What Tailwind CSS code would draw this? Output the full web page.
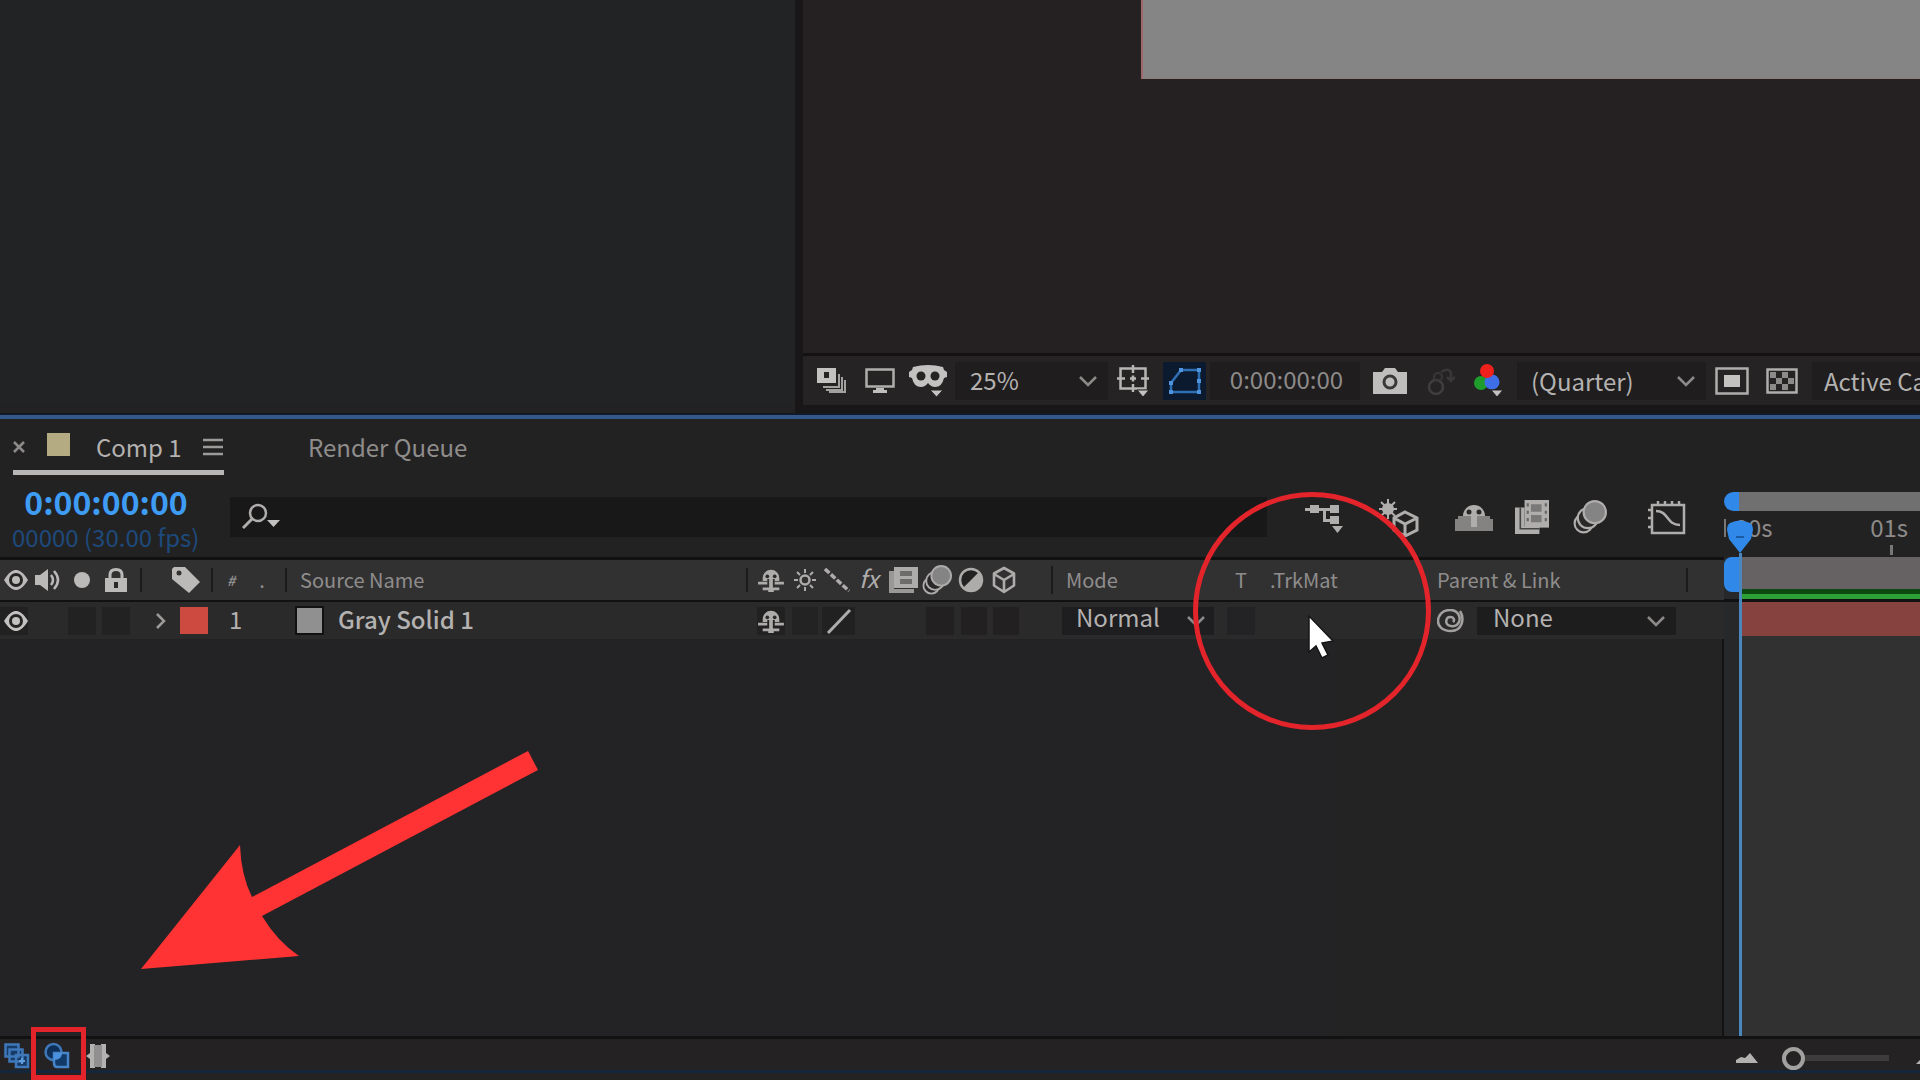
<!DOCTYPE html>
<html lang="en">
<head>
<meta charset="utf-8">
<title>Comp 1 - Timeline</title>
<script src="https://cdn.jsdelivr.net/npm/@tailwindcss/browser@4"></script>
</head>
<body class="relative flex h-screen flex-col overflow-hidden bg-[#232223] font-['Noto_Sans_CJK_SC','Noto_Sans',sans-serif] text-2xl leading-8 text-[#b4b2b0]">

<svg class="hidden" aria-hidden="true">
  <symbol id="chev" viewBox="0 0 20 12"><path d="M2 2l8 8 8-8" fill="none" stroke="currentColor" stroke-width="2.5"/></symbol>
  <symbol id="eye" viewBox="0 0 24 20"><path d="M0 10C5 2 9 0 12 0s7 2 12 10c-5 8-9 10-12 10S5 18 0 10z" fill="currentColor"/><circle cx="12" cy="10" r="7" fill="#252324"/><circle cx="12" cy="10" r="4" fill="currentColor"/></symbol>
  <symbol id="shy" viewBox="0 0 28 26"><path d="M5 11a9 9 0 0 1 18 0v3h-5v-2h-2v9h7v3h-6v2h-6v-2H5v-3h7v-9h-2v2H5z" fill="currentColor"/><path d="M0 15h10v3H0zM18 15h10v3H18z" fill="currentColor"/><circle cx="10" cy="9" r="2" fill="#2a2829"/><circle cx="18" cy="9" r="2" fill="#2a2829"/></symbol>
  <symbol id="cube" viewBox="0 0 26 28"><path d="M13 2l10 5.500v12L13 26 3 19.500v-12zM3 8l10 6 10-6M13 14v12" fill="none" stroke="currentColor" stroke-width="2.600" stroke-linejoin="round"/></symbol>
  <symbol id="discs" viewBox="0 0 32 32"><circle cx="10" cy="22" r="8.500" fill="#2a2829" stroke="currentColor" stroke-width="2"/><circle cx="14" cy="17" r="9.500" fill="#2a2829" stroke="currentColor" stroke-width="2"/><circle cx="20.500" cy="11.500" r="10.500" fill="#858484" stroke="currentColor" stroke-width="2"/></symbol>
  <symbol id="film" viewBox="0 0 32 32"><path d="M0 7h9v18h14v7H0z" fill="currentColor"/><path d="M5 7v20h18" fill="none" stroke="#444" stroke-width="1.500"/><path d="M9 0h23v26H9z" fill="currentColor"/><path d="M15 4h10v7H15zM15 14h10v7H15z" fill="#7a7878"/><path d="M11 3h2v3h-2zM11 10h2v3h-2zM11 17h2v3h-2zM28 3h2v3h-2zM28 10h2v3h-2zM28 17h2v3h-2z" fill="#666"/></symbol>
</svg>

<!-- Project panel and composition viewer -->
<section class="flex h-[413px] shrink-0">
  <div class="mb-2 w-[795px] shrink-0 bg-[#222324]"></div>
  <div class="w-2 shrink-0 bg-[#181617]"></div>
  <main class="flex min-w-0 flex-1 flex-col overflow-hidden bg-[#252122]">
    <div class="flex min-h-0 flex-1 flex-col pl-[338px]">
      <div class="h-[79px] border-b border-l-2 border-b-[#8f7b7b] border-l-[#a0686a] bg-[#858585]"></div>
    </div>
    <div class="flex h-[52px] shrink-0 items-center border-t-3 border-[#131112] bg-[#252323] pl-[5px]">
      <button class="flex h-10 w-12 shrink-0 items-center justify-center" aria-label="Always preview"><svg class="h-[26px] w-[30px]" viewBox="0 0 30 26"><path d="M0 0h19v15H0z" fill="#c4c2c1"/><path d="M7 4h5v6H7z" fill="#252323"/><path d="M22 6v13H6M25 9v13H9M28 12v12H12" fill="none" stroke="#a3a1a0" stroke-width="2"/></svg></button>
      <button class="flex h-10 w-12 shrink-0 items-center justify-center" aria-label="Primary viewer"><svg class="h-[26px] w-[30px]" viewBox="0 0 30 26"><path d="M1.500 1.500h27v17h-27z" fill="none" stroke="#b0aeac" stroke-width="2.500"/><path d="M11 20h8v2h3v3H8v-3h3z" fill="#c0bebc"/></svg></button>
      <button class="flex h-10 w-12 shrink-0 items-center justify-center" aria-label="VR view"><svg class="h-8 w-[38px]" viewBox="0 0 38 32"><path d="M4 2q15-4 30 0l1 3 3 2v5l-3 1q-2 9-9 9-4 0-7-4-3 4-7 4-7 0-9-9l-3-1V7l3-2z" fill="#c4c2c1"/><circle cx="12" cy="11" r="4.500" fill="#252323"/><circle cx="26" cy="11" r="4.500" fill="#252323"/><path d="M21 25h13l-6.500 7z" fill="#c4c2c1" stroke="#252323"/></svg></button>
      <div class="relative ml-[3px] h-[38px] w-[153px] shrink-0 bg-[#1f1d1e]">
        <select class="h-[36px] w-full appearance-none pl-[15px] leading-[36px]" aria-label="Magnification"><option>25%</option></select>
        <svg class="pointer-events-none absolute top-[13px] right-2.5 h-3 w-5 text-[#8d8b8a]"><use href="#chev"/></svg>
      </div>
      <button class="flex h-10 w-[50px] shrink-0 items-center justify-center" aria-label="Grid and guides"><svg class="h-[34px] w-8" viewBox="0 0 32 34"><path d="M3.500 4.500h25v20h-25z" fill="none" stroke="#b8b6b4" stroke-width="2.500"/><path d="M16 1v8M16 20v8M0 14.500h8M24 14.500h8M13 14.500h6M16 11.500v6" stroke="#b8b6b4" stroke-width="2.500"/><path d="M20 26h12l-6 7z" fill="#c4c2c1" stroke="#252323"/></svg></button>
      <button class="ml-[5px] flex h-[38px] w-[43px] shrink-0 items-center justify-center bg-[#0b1a2e]" aria-label="Mask visibility"><svg class="h-7 w-[34px]" viewBox="0 0 34 28"><path d="M13 3h18v22H3v-9z" fill="none" stroke="#2f6fb3" stroke-width="2.500"/><path d="M11 1h4v4h-4zM29 1h4v4h-4zM29 12h4v4h-4zM1 14h4v4H1zM1 23h4v4H1zM29 23h4v4h-4z" fill="#4f93dc"/></svg></button>
      <button class="ml-1 h-[38px] w-[150px] shrink-0 bg-[#1f1d1e] pb-[3px] pl-[3px] text-[#8d8b8a]">0:00:00:00</button>
      <button class="flex h-10 w-[60px] shrink-0 items-center justify-center" aria-label="Take snapshot"><svg class="h-[26px] w-[34px]" viewBox="0 0 34 26"><path d="M0 4h9l3-4h10l3 4h9v22H0z" fill="#c0bebc"/><circle cx="17" cy="14" r="6" fill="none" stroke="#3a3839" stroke-width="3"/></svg></button>
      <button class="flex h-10 w-10 shrink-0 items-center justify-center" aria-label="Show snapshot" disabled><svg class="h-7 w-[30px]" viewBox="0 0 30 28"><circle cx="11" cy="20" r="7" fill="none" stroke="#403e3f" stroke-width="2.500"/><circle cx="13" cy="10" r="4" fill="none" stroke="#393738" stroke-width="2"/><path d="M16 5q8-5 10 1v6M22 10l4 4 4-4" fill="none" stroke="#393738" stroke-width="2.500"/></svg></button>
      <button class="flex h-10 w-[57px] shrink-0 items-center justify-center" aria-label="Channels"><svg class="h-[34px] w-[30px]" viewBox="0 0 30 34"><circle cx="7" cy="19" r="7" fill="#1f9d2c"/><circle cx="18" cy="18" r="7.500" fill="#3f6fe8"/><circle cx="13" cy="7" r="7" fill="#f0201c"/><path d="M17 26h12l-6 7z" fill="#c4c2c1" stroke="#252323"/></svg></button>
      <div class="relative h-[38px] w-[189px] shrink-0 bg-[#1f1d1e]">
        <select class="h-[38px] w-full appearance-none pl-3.5 leading-[38px]" aria-label="Resolution"><option>(Quarter)</option></select>
        <svg class="pointer-events-none absolute top-[13px] right-2.5 h-3 w-5 text-[#8d8b8a]"><use href="#chev"/></svg>
      </div>
      <button class="flex h-10 w-[52px] shrink-0 items-center justify-center" aria-label="Region of interest"><svg class="h-7 w-[34px]" viewBox="0 0 34 28"><path d="M1.500 1.500h31v25h-31z" fill="none" stroke="#b0aeac" stroke-width="2.500"/><path d="M9 8h16v12H9z" fill="#c4c2c1"/></svg></button>
      <button class="flex h-10 w-12 shrink-0 items-center justify-center" aria-label="Transparency grid"><svg class="h-[26px] w-8" viewBox="0 0 32 26"><path d="M1.500 1.500h29v23h-29z" fill="none" stroke="#b0aeac" stroke-width="2.500"/><path d="M4 4h6v6H4zM16 4h6v6h-6zM10 10h6v6h-6zM22 10h6v6h-6zM4 16h6v6H4zM16 16h6v6h-6z" fill="#8d8b8a"/></svg></button>
      <div class="ml-1.5 h-[38px] shrink-0 bg-[#1f1d1e]">
        <select class="h-[38px] appearance-none pl-3 leading-[38px]" aria-label="3D view"><option>Active Camera</option></select>
      </div>
    </div>
    <div class="h-2 shrink-0 bg-[#181617]"></div>
  </main>
</section>

<!-- Timeline panel -->
<section class="flex min-h-0 flex-1 flex-col border-t-2 border-[#121a26]">
  <div class="h-1 shrink-0 bg-[#34588a]"></div>
  <div class="flex min-h-0 flex-1">
    <div class="flex min-w-0 flex-1 flex-col">
      <!-- Panel tabs -->
      <nav class="flex h-[56px] shrink-0 items-start pl-[13px]">
        <div class="flex h-[56px] w-[211px] items-center border-b-5 border-[#b9b7b6] pt-1">
          <button class="h-3 w-3" aria-label="Close Comp 1"><svg class="h-3 w-3" viewBox="0 0 12 12"><path d="M1 1l10 10M11 1L1 11" stroke="#8d8b8a" stroke-width="2.500"/></svg></button>
          <span class="mb-1 ml-[22px] h-[23px] w-[23px] bg-[#b5ab83]"></span>
          <a href="#comp" class="ml-[26px] w-[107px] text-[#b4b2b0]">Comp 1</a>
          <button class="h-5 w-5 shrink-0" aria-label="Panel menu"><svg class="h-5 w-5" viewBox="0 0 20 20"><path d="M0 3h20M0 10h20M0 17h20" stroke="#9d9b9a" stroke-width="2.500"/></svg></button>
        </div>
        <a href="#queue" class="ml-[84px] mt-3 text-[#8f8d8c]">Render Queue</a>
      </nav>
      <!-- Time, search and panel switches -->
      <div class="flex h-[82px] shrink-0">
        <div class="flex w-[230px] flex-col pl-3">
          <button class="mt-2 h-9 w-[188px] text-center text-[32px] leading-9 font-bold text-[#3f9cf5]">0:00:00:00</button>
          <span class="mt-1 h-7 leading-7 whitespace-nowrap text-[#1d4a7c]">00000 (30.00 fps)</span>
        </div>
        <label class="mt-[22px] flex h-10 min-w-0 flex-1 items-center bg-[#191819] pl-3">
          <svg class="h-7 w-10 shrink-0" viewBox="0 0 40 28"><circle cx="16" cy="10" r="8" fill="none" stroke="#b0aeac" stroke-width="2.500"/><path d="M10 16L1 25" stroke="#b0aeac" stroke-width="3"/><path d="M25 17h13l-6.500 7z" fill="#c4c2c1"/></svg>
          <input class="h-full min-w-0 flex-1 bg-transparent outline-none" aria-label="Search layers">
        </label>
        <div class="flex w-[457px] shrink-0 pt-6 pl-[38px] text-[#b0aeac]">
          <button class="h-9 w-[38px]" aria-label="Composition mini-flowchart"><svg class="h-9 w-[38px]" viewBox="0 0 38 36"><path d="M0 9h5V6h9v3h11V6h9v8h-9v-2h-4v8h4v-3h9v8h-9v-2h-7V12h-4v2H5v-2H0z" fill="currentColor"/><path d="M27 27h11l-5.500 7z" fill="currentColor"/></svg></button>
          <button class="ml-9 h-[38px] w-10" aria-label="Draft 3D"><svg class="h-[38px] w-10" viewBox="0 0 40 38"><circle cx="9" cy="10" r="6" fill="currentColor"/><path d="M9 0v20M0 10h18M2 3l14 14M16 3L2 17" stroke="currentColor" stroke-width="2"/><path d="M26 13l12 6v12l-12 6-11-6V19zM15 19l11 6 12-6M26 25v12" fill="#232223" stroke="currentColor" stroke-width="3"/></svg></button>
          <button class="ml-9 h-[38px] w-[38px]" aria-label="Hide shy layers"><svg class="h-[38px] w-[38px]" viewBox="0 0 38 38"><path d="M8 17a11 11 0 0 1 22 0v2H8z" fill="currentColor"/><path d="M3 17h32v3h3v12H0V20h3z" fill="#858382"/><path d="M16 17h6v11h-6z" fill="currentColor"/><circle cx="14" cy="13" r="2.500" fill="#2a2829"/><circle cx="24" cy="13" r="2.500" fill="#2a2829"/></svg></button>
          <button class="ml-[22px] h-9 w-[34px]" aria-label="Frame blending"><svg class="h-9 w-[34px]"><use href="#film"/></svg></button>
          <button class="ml-6 h-9 w-[34px]" aria-label="Motion blur"><svg class="h-9 w-[34px]"><use href="#discs"/></svg></button>
          <button class="ml-[41px] h-9 w-[38px]" aria-label="Graph editor"><svg class="h-9 w-[38px]" viewBox="0 0 38 36"><path d="M4 6h32v28H4zM8 12c13 0 10 14 24 14" fill="none" stroke="currentColor" stroke-width="2.500"/><path d="M10 2v4M17 2v4M24 2v4M31 2v4M0 11h4M0 19h4M0 28h4" stroke="currentColor" stroke-width="2.500"/></svg></button>
        </div>
      </div>
      <!-- Layer list -->
      <table class="w-full shrink-0 table-fixed border-separate border-spacing-0 text-left">
        <colgroup><col class="w-[142px]"><col class="w-[71px]"><col class="w-[74px]"><col><col class="w-[305px]"><col class="w-[172px]"><col class="w-[33px]"><col class="w-[174px]"><col class="w-[292px]"></colgroup>
        <thead>
          <tr class="h-[45px] bg-[#323132] text-xl text-[#8f8d8c] *:border-t-3 *:border-b-2 *:border-[#121112] *:p-0 *:font-normal">
            <th><div class="flex h-6 items-center border-r-2 border-[#1c1b1c] pl-1 text-[#bcbab9]">
              <svg class="h-5 w-6 shrink-0"><use href="#eye"/></svg>
              <svg class="ml-[7px] h-6 w-7 shrink-0" viewBox="0 0 28 24"><path d="M0 7h5l8-6v22l-8-6H0z" fill="currentColor"/><path d="M16 7q4 5 0 10M19 3q8 9 0 18" fill="none" stroke="currentColor" stroke-width="2.500"/></svg>
              <svg class="ml-[11px] h-4 w-4 shrink-0" viewBox="0 0 16 16"><circle cx="8" cy="8" r="8" fill="currentColor"/></svg>
              <svg class="ml-[15px] h-6 w-[22px] shrink-0" viewBox="0 0 22 24"><path d="M0 10h22v14H0z" fill="currentColor"/><path d="M5 11V7q0-5.500 6-5.500T17 7v4" fill="none" stroke="currentColor" stroke-width="3"/><path d="M9 14h4v6H9z" fill="#2a2829"/></svg>
            </div></th>
            <th><div class="flex h-6 items-center border-r-2 border-[#1c1b1c] pl-[30px]"><svg class="h-[26px] w-7 shrink-0" viewBox="0 0 28 26"><path d="M0 2l2-2h11l15 15-11 11L0 12z" fill="#bcbab9"/><circle cx="7" cy="6" r="2.500" fill="#323132"/></svg></div></th>
            <th><div class="flex h-6 items-center border-r-2 border-[#1c1b1c] pl-3.5"><i class="text-sm font-bold">#</i><span class="ml-6">.</span></div></th>
            <th class="!pl-[13px]"><div class="flex h-6 items-center border-r-2 border-[#1c1b1c]">Source Name</div></th>
            <th><div class="flex h-7 items-center border-r-2 border-[#1c1b1c] pl-[9px] text-[#aeacab]">
              <svg class="h-6 w-7 shrink-0"><use href="#shy"/></svg>
              <svg class="ml-[9px] h-6 w-[22px] shrink-0" viewBox="0 0 22 24"><circle cx="11" cy="12" r="4.500" fill="none" stroke="currentColor" stroke-width="2.500"/><path d="M11 1v4M11 19v4M0 12h4M18 12h4M3 4l3 3M19 4l-3 3M3 20l3-3M19 20l-3-3" stroke="currentColor" stroke-width="2"/></svg>
              <svg class="ml-2 h-6 w-[26px] shrink-0" viewBox="0 0 26 24"><path d="M1 1l24 22" stroke="currentColor" stroke-width="3.500" stroke-dasharray="6 2"/></svg>
              <i class="ml-[9px] w-7 pb-1 text-2xl">fx</i>
              <svg class="ml-0.5 h-[26px] w-[29px] shrink-0" viewBox="0 0 29 26"><path d="M0 4h5v18h20v4H0z" fill="#9a9897"/><path d="M5 0h24v21H5z" fill="currentColor"/><path d="M11 4h12v5H11zM11 12h12v5H11z" fill="#6d6b6c"/></svg>
              <svg class="ml-1 h-[30px] w-[30px] shrink-0"><use href="#discs"/></svg>
              <svg class="ml-1.5 h-[26px] w-[26px] shrink-0" viewBox="0 0 26 26"><circle cx="13" cy="13" r="11" fill="#232223" stroke="currentColor" stroke-width="2.500"/><path d="M21 5A11 11 0 0 1 5 21z" fill="currentColor"/></svg>
              <svg class="ml-[7px] h-7 w-[26px] shrink-0"><use href="#cube"/></svg>
            </div></th>
            <th class="!pl-[13px]">Mode</th>
            <th class="!pl-2.5">T</th>
            <th class="!pl-3">.TrkMat</th>
            <th class="!pl-[5px]"><div class="flex h-6 w-[251px] items-center border-r-2 border-[#1c1b1c]">Parent &amp; Link</div></th>
          </tr>
        </thead>
        <tbody>
          <tr class="h-[37px] bg-[#2b2a2b] *:p-0">
            <td><div class="flex h-7 items-center">
              <button class="flex h-7 w-7 shrink-0 items-center justify-center bg-[#222122] pl-1 text-[#c4c2c1]" aria-label="Toggle visibility"><svg class="h-5 w-6"><use href="#eye"/></svg></button>
              <button class="ml-10 h-7 w-7 bg-[#232223]" aria-label="Solo"></button><button class="ml-1.5 h-7 w-7 bg-[#232223]" aria-label="Lock"></button>
            </div></td>
            <td><div class="flex h-7 items-center pl-3.5">
              <button class="h-4 w-2.5" aria-label="Expand layer"><svg class="h-4 w-2.5" viewBox="0 0 10 16"><path d="M1 1l7 7-7 7" fill="none" stroke="#9d9b9a" stroke-width="2.500"/></svg></button>
              <span class="ml-3.5 h-[27px] w-7 bg-[#cc4a40]"></span>
            </div></td>
            <td><div class="flex h-7 items-center pb-[3px] pl-4">1</div></td>
            <td><div class="flex h-7 items-center pl-2"><span class="h-[29px] w-[29px] shrink-0 border-2 border-[#111] bg-[#8f908f]"></span><span class="ml-3.5 pb-[3px] font-medium">Gray Solid 1</span></div></td>
            <td><div class="flex h-7 items-center pl-[9px] text-[#aeacab]">
              <button class="flex h-7 w-7 items-center bg-[#222122]" aria-label="Shy"><svg class="h-6 w-7"><use href="#shy"/></svg></button>
              <button class="ml-[7px] h-7 w-[26px] bg-[#242324]" aria-label="Collapse"></button>
              <button class="ml-1 h-7 w-[33px] bg-[#222122]" aria-label="Quality"><svg class="h-7 w-[33px]" viewBox="0 0 33 28"><path d="M6 26L28 3" stroke="currentColor" stroke-width="3"/></svg></button>
              <button class="ml-[71px] h-7 w-7 bg-[#222021]" aria-label="Motion blur"></button>
              <button class="ml-[7px] h-7 w-[26px] bg-[#222021]" aria-label="Adjustment layer"></button>
              <button class="ml-1.5 h-7 w-[26px] bg-[#222021]" aria-label="3D layer"></button>
            </div></td>
            <td class="!pl-[9px]"><div class="relative h-7 w-[152px] bg-[#1e1d20]">
              <select class="block h-7 w-full appearance-none pb-[7px] pl-3.5 leading-5" aria-label="Blending mode"><option>Normal</option></select>
              <svg class="pointer-events-none absolute top-2 right-2 h-3 w-5 text-[#8d8b8a]"><use href="#chev"/></svg>
            </div></td>
            <td><button class="ml-0.5 block h-7 w-7 bg-[#232225]" aria-label="Preserve transparency"></button></td>
            <td></td>
            <td><div class="flex h-7 items-center pl-[5px]">
              <button class="h-6 w-7" aria-label="Parent pick whip"><svg class="h-6 w-7" viewBox="0 0 28 24"><path d="M23 2c5 8 2 20-9 20C5 22 1 17 1 12S5 1 13 1s11 7 9 12-8 5-11 3-2-8 2-8 5 3 3 5" fill="none" stroke="#a3a1a0" stroke-width="2.500"/></svg></button>
              <div class="relative ml-3 h-7 w-[199px] bg-[#1e1d1e]">
                <select class="block h-7 w-full appearance-none pb-[7px] pl-4 leading-5" aria-label="Parent layer"><option>None</option></select>
                <svg class="pointer-events-none absolute top-2 right-2.5 h-3 w-5 text-[#8d8b8a]"><use href="#chev"/></svg>
              </div>
            </div></td>
          </tr>
        </tbody>
      </table>
      <div class="flex-1 border-r-2 border-[#141314] bg-linear-to-r from-[#232225] from-75% to-[#232323] to-80%"></div>
    </div>

    <!-- Time graph -->
    <div class="relative flex w-[196px] shrink-0 flex-col overflow-hidden bg-[#272829]">
      <div class="flex h-[92px] shrink-0 bg-[#232223] pt-[73px]"><span class="w-[15px] rounded-l-full bg-[#3089e8]"></span><span class="flex-1 bg-[#717070]"></span></div>
      <div class="flex h-[46px] shrink-0 items-start justify-between bg-[#232223] pr-3 text-[#8d8b8a]"><span class="mt-2 h-[18px] border-l-2 border-[#777] pl-0.5 leading-4">:00s</span><span class="relative mt-2 leading-4">01s<i class="absolute top-[26px] left-5 h-2.5 w-[3px] bg-[#777]"></i></span></div>
      <div class="flex h-[45px] shrink-0 border-b-3 border-[#121112]"><span class="h-[35px] w-[15px] rounded-l-lg bg-[#3089e8]"></span><span class="flex flex-1 flex-col bg-[#666163]"><i class="mt-auto h-[5px] bg-[#0c4a12]"></i><i class="h-[5px] bg-[#2ba136]"></i></span></div>
      <div class="ml-[17px] h-[34px] shrink-0 bg-[#85423f]"></div>
      <div class="ml-[17px] flex-1 bg-[#323132]"></div>
      <svg class="absolute top-[101px] left-[3px] h-[33px] w-[26px]" viewBox="0 0 26 33"><path d="M3 3q10-5 20 0 3 2 3 7l-2 9-11 14L2 19 0 10q0-5 3-7z" fill="#3089e8"/><path d="M9 17h8" stroke="#1c5ca5" stroke-width="2"/></svg>
      <div class="absolute top-[134px] bottom-0 left-[15px] w-[3px] bg-[#4b86bd]"></div>
    </div>
  </div>

  <!-- Panel footer -->
  <footer class="flex h-[44px] shrink-0 flex-col border-t-3 border-[#131212] bg-[#252223]">
    <div class="flex h-[34px] shrink-0 items-end border-b-3 border-[#14263c] pl-1">
      <button class="h-7 w-[26px]" aria-label="Layer switches pane"><svg class="h-7 w-[26px]" viewBox="0 0 26 28"><path d="M1.500 2.500h13v12h-13zM5.500 7.500h13v12h-13zM12 13h12v12H12z" fill="#173b66" stroke="#3f78b9" stroke-width="2.500"/><path d="M15 19h6M18 16v6" stroke="#5f9ddd" stroke-width="2"/></svg></button>
      <button class="ml-3.5 h-7 w-[26px]" aria-label="Transfer controls pane"><svg class="h-7 w-[26px]" viewBox="0 0 26 28"><circle cx="9.500" cy="10" r="8" fill="#0d2f58" stroke="#3f78b9" stroke-width="2.500"/><path d="M10 11h14v14H13q-3 0-3-4z" fill="#123a68" stroke="#4584c9" stroke-width="2.500"/><path d="M10 11h8q0 7-8 7z" fill="#4a90dd"/></svg></button>
      <button class="ml-4 h-7 w-6" aria-label="In, out, duration pane"><svg class="h-7 w-6" viewBox="0 0 24 28"><path d="M9 2H4v9l-4 3 4 3v9h5zM15 2h5v9l4 3-4 3v9h-5z" fill="#b4b2b1"/><path d="M8 3h8v22H8z" fill="#918f90"/></svg></button>
      <div class="ml-auto flex h-6 w-[184px] items-center">
        <svg class="h-2.5 w-[22px] shrink-0" viewBox="0 0 22 10"><path d="M0 10v-3l5-3 4 1 5-5 8 10z" fill="#b4b2b1"/></svg>
        <label class="ml-6 flex h-6 w-[107px] shrink-0 items-center">
          <input type="range" min="0" max="100" value="0" aria-label="Timeline zoom" class="h-1.5 w-full appearance-none bg-[#3d3b3c] [&::-webkit-slider-thumb]:h-[23px] [&::-webkit-slider-thumb]:w-[23px] [&::-webkit-slider-thumb]:appearance-none [&::-webkit-slider-thumb]:rounded-full [&::-webkit-slider-thumb]:border-4 [&::-webkit-slider-thumb]:border-[#a3a1a0] [&::-webkit-slider-thumb]:bg-[#252223]">
        </label>
        <svg class="ml-[27px] h-3 w-[30px] shrink-0" viewBox="0 0 30 12"><path d="M0 12L12 0l18 12z" fill="#b4b2b1"/></svg>
      </div>
    </div>
  </footer>
</section>

<!-- Annotations drawn over the panels -->
<svg class="pointer-events-none absolute top-[750px] left-[140px] h-[220px] w-[400px]" viewBox="0 0 400 220" aria-hidden="true"><path d="M388 1l10 19L122 166q15 25 37 40L1 219 100 95q1 30 12 52z" fill="#ff3333"/></svg>
<div class="pointer-events-none absolute top-[492px] left-[1193px] size-[238px] rounded-full border-5 border-[#e3242b]"></div>
<div class="pointer-events-none absolute top-[1027px] left-[31px] h-[53px] w-[55px] border-5 border-[#e3242b]"></div>
<svg class="pointer-events-none absolute top-[613px] left-[1307px] h-[46px] w-7" viewBox="0 0 28 46" aria-hidden="true"><path d="M2 3v36l7-6 6 12 6-3-6-12 11-2z" fill="#fff" stroke="#171617" stroke-width="1.500"/></svg>
</body>
</html>
